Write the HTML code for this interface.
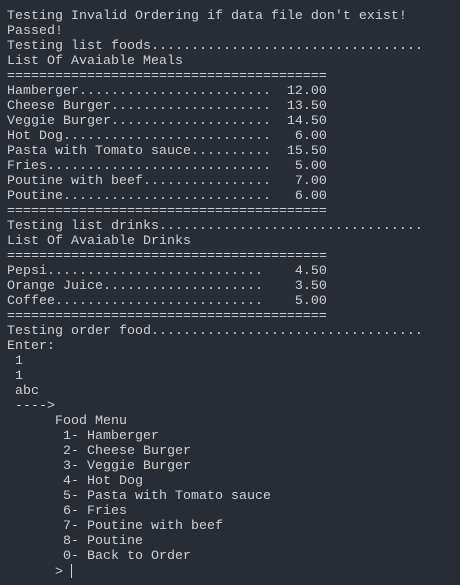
<!DOCTYPE html>
<html><head><meta charset="utf-8"><style>
html,body{margin:0;padding:0;background:#282c34;width:460px;height:585px;overflow:hidden}
pre{margin:0;padding:9px 0 0 7px;font-family:"Liberation Mono","Courier New",monospace;font-size:13.33px;line-height:15px;color:#d0d0d0}
.c{display:inline-block;width:1px;height:14px;background:#d0d0d0;vertical-align:-3px}
</style></head><body><pre>Testing Invalid Ordering if data file don't exist!
Passed!
Testing list foods..................................
List Of Avaiable Meals
========================================
Hamberger........................  12.00
Cheese Burger....................  13.50
Veggie Burger....................  14.50
Hot Dog..........................   6.00
Pasta with Tomato sauce..........  15.50
Fries............................   5.00
Poutine with beef................   7.00
Poutine..........................   6.00
========================================
Testing list drinks.................................
List Of Avaiable Drinks
========================================
Pepsi...........................    4.50
Orange Juice....................    3.50
Coffee..........................    5.00
========================================
Testing order food..................................
Enter:
 1
 1
 abc
 ----&gt;
      Food Menu
       1- Hamberger
       2- Cheese Burger
       3- Veggie Burger
       4- Hot Dog
       5- Pasta with Tomato sauce
       6- Fries
       7- Poutine with beef
       8- Poutine
       0- Back to Order
      &gt; <span class="c"></span></pre></body></html>
